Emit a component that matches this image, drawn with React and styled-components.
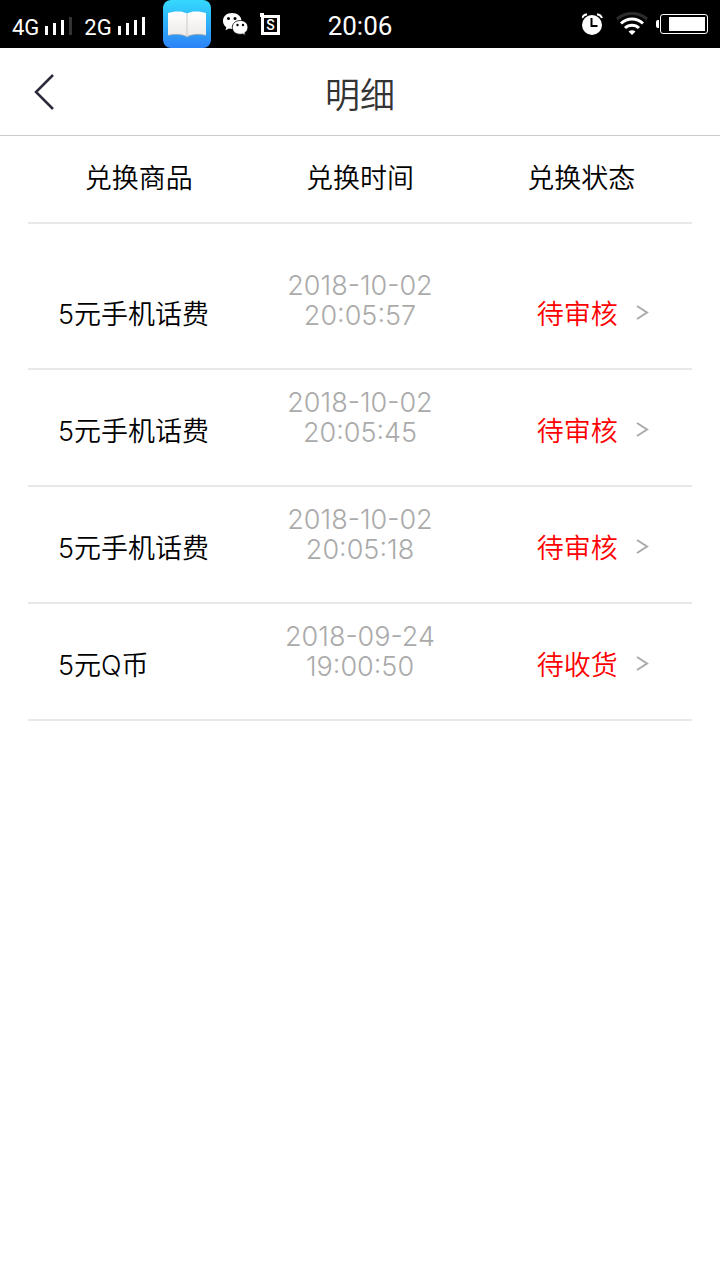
import React from "react";
import styled, { createGlobalStyle } from "styled-components";

const GlobalStyle = createGlobalStyle`
  * { box-sizing: border-box; }
  body {
    margin: 0;
    background: #fff;
    color: #000;
    font-family: Inter, "Noto Sans CJK SC", sans-serif;
    font-weight: 350;
  }
`;

const StatusBar = styled.div`
  display: grid;
  grid-template-columns: 1fr auto 1fr;
  align-items: center;
  height: 48px;
  padding: 0 12px;
  background: #000;
  color: #fff;
  font-family: Roboto, sans-serif;
  font-weight: 400;
  svg { display: block; flex: none; }
`;

const StatusGroup = styled.div`
  display: flex;
  align-items: center;
  justify-content: ${(p) => (p.$end ? "flex-end" : "flex-start")};
  gap: ${(p) => (p.$end ? "8px" : "12px")};
`;

const Network = styled.span`
  display: flex;
  align-items: baseline;
  gap: 6px;
  padding-top: 8px;
  font-size: 22px;
  line-height: 24px;
`;

const AppBadges = styled.span`
  display: flex;
  align-items: center;
  gap: 11px;
  margin-left: 6px;
`;

const Clock = styled.time`
  padding-top: 4px;
  font-size: 26px;
  line-height: 32px;
  font-weight: 400;
`;

const Header = styled.header`
  display: grid;
  grid-template-columns: 88px 1fr 88px;
  align-items: center;
  height: 88px;
  border-bottom: 1px solid #ccc;
`;

const BackButton = styled.button`
  display: flex;
  align-items: center;
  height: 87px;
  padding: 0 0 0 32px;
  border: 0;
  background: none;
`;

const Title = styled.h1`
  margin: 0;
  padding-top: 6px;
  text-align: center;
  font-size: 35px;
  line-height: 48px;
  font-weight: 350;
  color: #333;
`;

const Content = styled.main`
  padding: 0 28px;
`;

const Table = styled.table`
  width: 100%;
  table-layout: fixed;
  border-collapse: separate;
  border-spacing: 0;
  font-size: 27px;
  line-height: 30px;
`;

const HeadCell = styled.th`
  height: 88px;
  padding: 0;
  border-bottom: 2px solid #e8e8e8;
  font-weight: 350;
  text-align: center;
`;

const Cell = styled.td`
  padding: 18px 0 38px;
  border-bottom: 2px solid #e8e8e8;
  vertical-align: bottom;
  tr:first-child > & { padding-top: 47px; }
`;

const ProductCell = styled(Cell)`
  padding-left: 30px;
`;

const TimeCell = styled(Cell)`
  padding-bottom: 37px;
  text-align: center;
  font-weight: 300;
  color: #aaa;
  span { display: block; }
`;

const StatusCell = styled(Cell)`
  padding-left: 66px;
`;

const StatusLink = styled.a`
  display: flex;
  align-items: center;
  gap: 18px;
  color: #f00;
  text-decoration: none;
`;

function Signal({ full }) {
  return (
    <svg width="27" height="18" viewBox="0 0 27 18" fill="#fff">
      <rect x="0" y="9" width="3" height="9" />
      <rect x="8" y="6" width="3" height="12" />
      <rect x="16" y="3" width="3" height="15" />
      <rect x="24" y="0" width="3" height="18" fill={full ? "#fff" : "#333"} />
    </svg>
  );
}

function BookIcon() {
  return (
    <svg width="48" height="48" viewBox="0 0 48 48">
      <defs>
        <linearGradient id="sky" x1="0" y1="0" x2="0" y2="1">
          <stop offset="0" stopColor="#35d9fd" />
          <stop offset="1" stopColor="#2c82f6" />
        </linearGradient>
        <linearGradient id="page" x1="0" y1="0" x2="0" y2="1">
          <stop offset="0" stopColor="#fff" />
          <stop offset="1" stopColor="#ece9e6" />
        </linearGradient>
      </defs>
      <rect width="48" height="48" rx="8" fill="url(#sky)" />
      <path d="M5 13C11 11 19 10.500 24 13.500C29 10.500 37 11 43 13V35.500C37 34 29 34 24 37C19 34 11 34 5 35.500Z" fill="url(#page)" />
      <path d="M5 35.500C11 34 19 34 24 37C29 34 37 34 43 35.500" fill="none" stroke="#8b9db4" strokeWidth="0.800" />
      <path d="M24 13.500V37" stroke="#c9c9cc" strokeWidth="1" />
    </svg>
  );
}

function WeChatIcon() {
  return (
    <svg width="26" height="24" viewBox="0 0 26 24">
      <path d="M10 1C4.500 1 1 4.500 1 9c0 2.700 1.300 4.800 3.300 6.200L3.500 18.200l3.400-1.700c1 .3 2 .5 3.100.5 5.500 0 9.500-3.500 9.500-8S15.500 1 10 1Z" fill="#fff" />
      <circle cx="6.500" cy="6.500" r="1.500" />
      <circle cx="13" cy="6.500" r="1.500" />
      <path d="M18.200 8.500c-4.600 0-7.900 3-7.900 6.900s3.300 6.900 7.900 6.900c.9 0 1.800-.1 2.600-.4l2.700 1.500-.7-2.600c1.900-1.200 3.100-3.200 3.100-5.400 0-3.900-3.100-6.900-7.700-6.900Z" fill="#fff" stroke="#000" strokeWidth="0.800" />
      <circle cx="15.500" cy="13" r="1.200" />
      <circle cx="21" cy="13" r="1.200" />
    </svg>
  );
}

function SIcon() {
  return (
    <svg width="22" height="24" viewBox="-1 0 22 24">
      <rect x="2.500" y="4.500" width="16" height="17" fill="none" stroke="#fff" strokeWidth="3" />
      <rect x="0" y="1" width="4" height="4" fill="#fff" />
      <text x="10.500" y="18" textAnchor="middle" fontFamily="Roboto, sans-serif" fontWeight="500" fontSize="14" fill="#fff">S</text>
    </svg>
  );
}

function AlarmIcon() {
  return (
    <svg width="22" height="22" viewBox="0 0 22 22">
      <circle cx="10" cy="12" r="10" fill="#fff" />
      <path d="M0 5C1 2.500 2.500 1.500 5 1.200M20 5C19 2.500 17.500 1.500 15 1.200" fill="none" stroke="#fff" strokeWidth="2" />
      <path d="M9.500 5V13H15.500" fill="none" stroke="#000" strokeWidth="2" />
    </svg>
  );
}

function WifiIcon() {
  return (
    <svg width="36" height="24" viewBox="-4 0 36 24" fill="none" strokeWidth="3">
      <path d="M1 7C9.500-.3 22.500-.3 31 7" stroke="#2c2c2c" />
      <path d="M5 11.500C11.500 5.500 20.500 5.500 27 11.500" stroke="#fff" />
      <path d="M9 16C13 12.200 19 12.200 23 16" stroke="#fff" />
      <path d="M12.500 19.500Q16 16.800 19.500 19.500L16 23Z" fill="#fff" />
    </svg>
  );
}

function BatteryIcon() {
  return (
    <svg width="52" height="20" viewBox="0 0 52 20">
      <path d="M3 6H2Q0 6 0 8V12Q0 14 2 14H3Z" fill="#fff" />
      <rect x="4.500" y="0.500" width="47" height="19" rx="2.500" fill="none" stroke="#fff" />
      <rect x="13" y="3" width="36" height="14" fill="#fff" />
    </svg>
  );
}

function BackIcon() {
  return (
    <svg width="24" height="36" viewBox="0 0 24 36" fill="none" stroke="#2c2a3d" strokeWidth="2.500">
      <path d="M21 1L4 18L21 35" />
    </svg>
  );
}

function ChevronIcon() {
  return (
    <svg width="14" height="20" viewBox="0 0 14 20" fill="none" stroke="#aaa" strokeWidth="2">
      <path d="M1 1L11 7.500L1 14" />
    </svg>
  );
}

const records = [
  { product: "5元手机话费", date: "2018-10-02", time: "20:05:57", status: "待审核" },
  { product: "5元手机话费", date: "2018-10-02", time: "20:05:45", status: "待审核" },
  { product: "5元手机话费", date: "2018-10-02", time: "20:05:18", status: "待审核" },
  { product: "5元Q币", date: "2018-09-24", time: "19:00:50", status: "待收货" },
];

export default function App() {
  return (
    <>
      <GlobalStyle />
      <StatusBar>
        <StatusGroup>
          <Network>4G<Signal /></Network>
          <Network>2G<Signal full /></Network>
          <AppBadges>
            <BookIcon />
            <WeChatIcon />
            <SIcon />
          </AppBadges>
        </StatusGroup>
        <Clock>20:06</Clock>
        <StatusGroup $end>
          <AlarmIcon />
          <WifiIcon />
          <BatteryIcon />
        </StatusGroup>
      </StatusBar>
      <Header>
        <BackButton type="button" aria-label="返回"><BackIcon /></BackButton>
        <Title>明细</Title>
      </Header>
      <Content>
        <Table>
          <thead>
            <tr>
              <HeadCell scope="col">兑换商品</HeadCell>
              <HeadCell scope="col">兑换时间</HeadCell>
              <HeadCell scope="col">兑换状态</HeadCell>
            </tr>
          </thead>
          <tbody>
            {records.map((r) => (
              <tr key={r.time}>
                <ProductCell>{r.product}</ProductCell>
                <TimeCell><span>{r.date}</span><span>{r.time}</span></TimeCell>
                <StatusCell>
                  <StatusLink href="#detail">{r.status}<ChevronIcon /></StatusLink>
                </StatusCell>
              </tr>
            ))}
          </tbody>
        </Table>
      </Content>
    </>
  );
}
